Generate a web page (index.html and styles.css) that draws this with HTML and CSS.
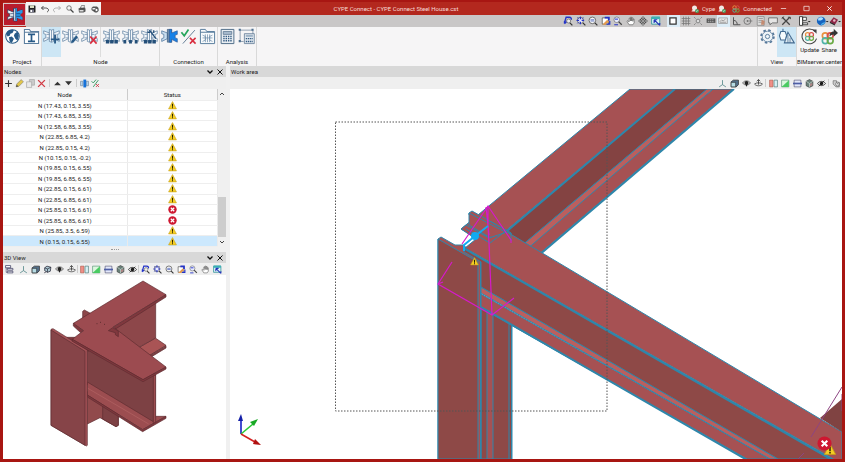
FILE: index.html
```html
<!DOCTYPE html>
<html lang="en">
<head>
<meta charset="utf-8">
<title>CYPE Connect - CYPE Connect Steel House.cst</title>
<link rel="stylesheet" href="styles.css">
</head>
<body>
<svg class="sprite" aria-hidden="true">
  <symbol id="save" viewBox="0 0 16 16"><path d="M1 1h13l1 1v13H1z" fill="#222"/><path d="M4 1h8v5H4z" fill="#d9dfc2"/><path d="M4 9h8v6H4z" fill="#778"/><path d="M5 10h3v4H5z" fill="#fff"/></symbol>
  <symbol id="undo" viewBox="0 0 16 16"><path d="M5 2L1 6l4 4M1 6h8c4 0 6 2 6 4s-1 3-3 4" fill="none" stroke="#333" stroke-width="1.7"/></symbol>
  <symbol id="redo" viewBox="0 0 16 16"><path d="M11 2l4 4-4 4M15 6H7c-4 0-6 2-6 4s1 3 3 4" fill="none" stroke="#999" stroke-width="1.5"/></symbol>
  <symbol id="search" viewBox="0 0 16 16"><circle cx="6" cy="6" r="4.5" fill="#f4f4f4" stroke="#555" stroke-width="1.5"/><path d="M9 9l6 6" stroke="#444" stroke-width="2.4"/></symbol>
  <symbol id="print" viewBox="0 0 16 16"><path d="M1 7l4-2h9l1 3v5l-4 2H2z" fill="#555"/><path d="M5 6l2-5h6l-1 5z" fill="#eee" stroke="#333"/><path d="M3 10h8v3H3z" fill="#ddd"/></symbol>
  <symbol id="print2" viewBox="0 0 16 16"><path d="M1 6l3-3h8l3 3v6l-3 3H8L1 10z" fill="#555"/><path d="M3 6h6v3H3z" fill="#eee"/><circle cx="11" cy="10" r="3" fill="#fff" stroke="#222"/></symbol>

  <symbol id="zprev" viewBox="0 0 16 16"><path d="M2 12L5 2h5c3 0 4 2 3 4" fill="none" stroke="#2433c8" stroke-width="2.2"/><path d="M1 8l2 5 4-4z" fill="#2433c8"/><circle cx="9" cy="8" r="3.2" fill="#eee" stroke="#555"/><path d="M11 11l4 4" stroke="#333" stroke-width="2"/></symbol>
  <symbol id="zall" viewBox="0 0 16 16"><circle cx="7" cy="7" r="5" fill="#eef" stroke="#555" stroke-width="1.2"/><path d="M11 11l4 4" stroke="#333" stroke-width="2"/><path d="M7 1v4M7 9v4M1 7h4M9 7h4" stroke="#2433c8" stroke-width="2"/><path d="M2 2l3 3M12 2L9 5M2 12l3-3" stroke="#2433c8"/></symbol>
  <symbol id="zout" viewBox="0 0 16 16"><circle cx="7" cy="7" r="5.3" fill="#f5f5f5" stroke="#555" stroke-width="1.3"/><path d="M11 11l4 4" stroke="#333" stroke-width="2"/><path d="M4 6h6M4 8h6" stroke="#556bc0" stroke-width="1.3"/></symbol>
  <symbol id="zwin" viewBox="0 0 16 16"><path d="M2 3h10v10H2z" fill="#fff" stroke="#333"/><path d="M6 1h8v6h-3V4H6z" fill="#2433c8"/><path d="M2 14l8-8 3 3-6 5z" fill="#e59b4d"/><path d="M9 13h5V8" fill="none" stroke="#2433c8" stroke-width="2"/></symbol>
  <symbol id="zfind" viewBox="0 0 16 16"><circle cx="6" cy="6" r="4.5" fill="#e7ebff" stroke="#666"/><path d="M9 9l5 5" stroke="#444" stroke-width="2"/><path d="M3 5h5M2 14h6" stroke="#2433c8" stroke-width="1.6"/></symbol>
  <symbol id="hand" viewBox="0 0 16 16"><path d="M5 14L1.500 8.500 3 7.500l2 2V3.500h2V8 2h2v6-5h2v5.500V5h2v6l-2 3z" fill="#fff" stroke="#555"/></symbol>
  <symbol id="move" viewBox="0 0 16 16"><path d="M8 1l3 3H9v3h3V5l3 3-3 3V9H9v3h2l-3 3-3-3h2V9H4v2L1 8l3-3v2h3V4H5z" fill="#eee" stroke="#333" stroke-width="1.200"/></symbol>
  <symbol id="screen" viewBox="0 0 16 16"><path d="M1 2h13v11H1z" fill="#dff5f6" stroke="#34949c" stroke-width="1.400"/><path d="M1 1h13v4H1z" fill="#3ab0b5"/><path d="M5 6l9 9M5 6v5M5 6h5M14 15v-4" stroke="#2433b8" stroke-width="1.800" fill="none"/></symbol>

  <symbol id="square" viewBox="0 0 16 16"><path d="M3 3h10v10H3z" fill="#fff" stroke="#333" stroke-width="2"/></symbol>
  <symbol id="grid" viewBox="0 0 16 16"><path d="M4 1v14M8 1v14M12 1v14M1 4h14M1 8h14M1 12h14" stroke="#777" stroke-width="1.200"/></symbol>
  <symbol id="snap" viewBox="0 0 16 16"><circle cx="8" cy="8" r="3" fill="#ddd" stroke="#555"/><path d="M2 2l2 2M14 2l-2 2M2 14l2-2M14 14l-2-2" stroke="#666" stroke-width="1.300"/></symbol>
  <symbol id="keys" viewBox="0 0 16 16"><path d="M1 4h14v7H1z" fill="#555"/><path d="M3 6h10M3 9h10" stroke="#ddd" stroke-dasharray="2 1"/></symbol>
  <symbol id="ruler" viewBox="0 0 16 16"><path d="M1 3h14v9H1z" fill="#e6e6e6" stroke="#888"/><path d="M3 9l3-3 2 2 4-3M3 10h10" stroke="#777" fill="none"/></symbol>
  <symbol id="angle" viewBox="0 0 16 16"><path d="M4 2v12h11M4 7c4 0 6 3 6 7" fill="none" stroke="#555" stroke-width="1.600"/></symbol>
  <symbol id="orbit" viewBox="0 0 16 16"><circle cx="7" cy="8" r="5.500" fill="none" stroke="#666" stroke-width="1.200"/><path d="M7 8h8" stroke="#666"/><circle cx="7" cy="8" r="1.200" fill="#555"/></symbol>
  <symbol id="table" viewBox="0 0 16 16"><path d="M2 1h11v14H2z" fill="#ddd" stroke="#777"/><path d="M4 4h7M4 7h7M4 10h7" stroke="#777"/><path d="M9 6l5 2-1 6H8z" fill="#c48b72"/></symbol>
  <symbol id="note" viewBox="0 0 16 16"><path d="M1 3h14v8H7l-4 3v-3H1z" fill="#e5e5e5" stroke="#555" stroke-width="1.200"/></symbol>
  <symbol id="tools" viewBox="0 0 16 16"><path d="M2 2l12 12M14 2L2 14" stroke="#444" stroke-width="2"/><path d="M1 4l4-3M11 2h4v3" stroke="#444" stroke-width="1.500" fill="none"/></symbol>
  <symbol id="dock" viewBox="0 0 20 16"><path d="M2 1h5v14H2zM7 2h6v5H7zM7 11h8v3H7z" fill="#fff" stroke="#333" stroke-width="1.400"/><path d="M15 8h5l-2.500 2z" fill="#222"/></symbol>
  <symbol id="globe" viewBox="0 0 20 16"><circle cx="8" cy="8" r="7" fill="#1764c0"/><path d="M3 4c3-3 7-2 8 0-1 3-5 4-8 3z" fill="#a9ddff"/><path d="M8 14c2-2 4-3 6-3" stroke="#53b4ee" stroke-width="2"/><path d="M15 8h5l-2.500 2z" fill="#222"/></symbol>
  <symbol id="book" viewBox="0 0 20 16"><path d="M1 9l6-7 7 4-5 8z" fill="#8f2546"/><path d="M1 9l8 4v2l-8-4z" fill="#222"/><circle cx="8" cy="7" r="2" fill="#e7b8c5"/><path d="M14 8h5l-2.500 2z" fill="#222"/></symbol>

  <symbol id="plus" viewBox="0 0 16 16"><path d="M8 2v12M2 8h12" stroke="#333" stroke-width="2"/></symbol>
  <symbol id="pencil" viewBox="0 0 16 16"><path d="M2 14l1-5 8-8 4 4-8 8z" fill="#e1c64a" stroke="#777"/><path d="M2 14l1-4 3 3z" fill="#444"/></symbol>
  <symbol id="copy" viewBox="0 0 16 16"><path d="M6 1h9v10H6z" fill="#ccc" stroke="#999"/><path d="M1 5h9v10H1z" fill="#e9e9e9" stroke="#999"/></symbol>
  <symbol id="del" viewBox="0 0 16 16"><path d="M2 2l12 12M14 2L2 14" stroke="#d23c46" stroke-width="2.400"/></symbol>
  <symbol id="up" viewBox="0 0 16 16"><path d="M2 11l6-6 6 6z" fill="#333"/></symbol>
  <symbol id="down" viewBox="0 0 16 16"><path d="M2 4h12l-6 7z" fill="#333"/></symbol>
  <symbol id="jblue" viewBox="0 0 16 16"><path d="M1 4h4v8H1zM11 4h4v8h-4z" fill="#b7d5ef" stroke="#678"/><path d="M6 1h5v14H6z" fill="#1672d8"/></symbol>
  <symbol id="check" viewBox="0 0 16 16"><path d="M1 4l3 3 5-6M4 14L13 2" fill="none" stroke="#3a9c63" stroke-width="1.700"/><path d="M9 9l5 5M14 9l-5 5" stroke="#d23c46" stroke-width="1.700"/></symbol>

  <symbol id="layers" viewBox="0 0 16 16"><path d="M1 1h9v4H1zM4 6h10v3H4zM4 11h10v3H4z" fill="#fff" stroke="#446" stroke-width="1.400"/><path d="M2 5v8h2" fill="none" stroke="#446"/></symbol>
  <symbol id="axes" viewBox="0 0 16 16"><path d="M8 2v8L2 14M8 10l6 4" fill="none" stroke="#4c8384" stroke-width="1.400"/></symbol>
  <symbol id="cube" viewBox="0 0 16 16"><path d="M2 5l4-3h9v8l-4 4H2z" fill="#54708a" stroke="#222" stroke-width="1.200"/><path d="M2 6h8v8H2z" fill="#b7dce4" stroke="#222"/></symbol>
  <symbol id="cuber" viewBox="0 0 16 16"><path d="M3 5l4-3 7 2-1 7-5 2-5-3z" fill="#acc8d2" stroke="#223" stroke-width="1.300"/><path d="M3 5l5 2 6-3M8 7v6M2 14l4-2" stroke="#223" stroke-width="1.200" fill="none"/></symbol>
  <symbol id="orb" viewBox="0 0 16 16"><path d="M1 7c3-5 11-5 14 0-3 5-11 5-14 0z" fill="#ddd" stroke="#333"/><circle cx="8" cy="7" r="3.500" fill="#222"/><path d="M8 9v4" stroke="#222" stroke-width="2"/></symbol>
  <symbol id="plane" viewBox="0 0 16 16"><path d="M1 9c3-3 11-3 14 0-3 4-11 4-14 0z" fill="#eee" stroke="#333" stroke-width="1.300"/><path d="M8 1v9M5 4l3-3 3 3" fill="none" stroke="#333" stroke-width="1.400"/></symbol>
  <symbol id="secr" viewBox="0 0 16 16"><path d="M1 2h6v12H1z" fill="#f08f88" stroke="#a54"/><path d="M9 2h6v12H9z" fill="#d8f1f4" stroke="#366"/></symbol>
  <symbol id="secg" viewBox="0 0 16 16"><path d="M1 2h13v12H1z" fill="#dbf7de" stroke="#486"/><path d="M1 14L14 2v12z" fill="#4acb62"/></symbol>
  <symbol id="secb" viewBox="0 0 16 16"><path d="M2 2h12v12H2z" fill="#e3e7fa" stroke="#446"/><path d="M0 8h16" stroke="#4e5ea5" stroke-width="3"/></symbol>
  <symbol id="hex" viewBox="0 0 16 16"><path d="M8 1l6 3v8l-6 3-6-3V4z" fill="#698079" stroke="#333"/><path d="M2 4l6 4 6-4M8 8v7" stroke="#e2e9e5" fill="none"/><path d="M9 9l4-2v4l-4 2z" fill="#b58686"/></symbol>
  <symbol id="eye" viewBox="0 0 16 16"><path d="M1 8c3-5 11-5 14 0-3 5-11 5-14 0z" fill="#eee" stroke="#222" stroke-width="1.500"/><circle cx="8" cy="8" r="3" fill="#111"/><path d="M3 13L13 3" stroke="#222" stroke-width="1.500"/></symbol>
  <symbol id="cubes" viewBox="0 0 16 16"><path d="M2 3h6v3h5v8H7L2 9z" fill="#ccc" stroke="#555"/><circle cx="10" cy="9" r="3.500" fill="#eee" stroke="#444"/><path d="M10 7v2h2" stroke="#444" fill="none"/></symbol>

  <symbol id="warn" viewBox="0 0 16 16"><path d="M8 1l7 13H1z" fill="#f4ce24" stroke="#c69d18" stroke-linejoin="round"/><path d="M8 5v5M8 11v2" stroke="#272100" stroke-width="1.800"/></symbol>
  <symbol id="err" viewBox="0 0 16 16"><circle cx="8" cy="8" r="7.500" fill="#ce1730"/><path d="M5 5l6 6M11 5l-6 6" stroke="#fff" stroke-width="2.200"/></symbol>
  <symbol id="chev" viewBox="0 0 16 16"><path d="M3 5l5 5 5-5" fill="none" stroke="#111" stroke-width="2.600"/></symbol>
  <symbol id="chevup" viewBox="0 0 16 16"><path d="M4 10l4-4 4 4" fill="none" stroke="#444" stroke-width="2"/></symbol>
  <symbol id="close" viewBox="0 0 16 16"><path d="M3 3l10 10M13 3L3 13" stroke="currentColor" stroke-width="2"/></symbol>
  <symbol id="min" viewBox="0 0 16 16"><path d="M2 8h12" stroke="#fff" stroke-width="1.500"/></symbol>
  <symbol id="max" viewBox="0 0 16 16"><path d="M2 3h12v10H2z" fill="none" stroke="#fff" stroke-width="1.500"/></symbol>
  <symbol id="user" viewBox="0 0 16 16"><circle cx="7" cy="6" r="5" fill="#f2e9e5"/><path d="M1 13c0-5 12-5 12 0z" fill="#f2e9e5"/><circle cx="12" cy="12" r="4" fill="#4b9e61"/><path d="M10 12l2 1 2-3" stroke="#fff" fill="none"/></symbol>
  <symbol id="rings" viewBox="0 0 16 16"><g fill="none" stroke-width="2"><circle cx="5" cy="5" r="3.400" stroke="#e8903e"/><circle cx="11" cy="5" r="3.400" stroke="#d8504a"/><circle cx="5" cy="11" r="3.400" stroke="#50b3a7"/><circle cx="11" cy="11" r="3.400" stroke="#6aaa45"/></g></symbol>

  <symbol id="joint" viewBox="0 0 24 24"><g fill="#f5f8fb" stroke="#5c7e9f" stroke-width="1"><path d="M1 4l8 3v8l-8 4v-4l3-1V9L1 8zM23 4l-8 3v8l8 4v-4l-3-1V9l3-1z"/><path d="M9 2l3 1 3-1v17l-3 1-3-1zM12 3v17M5 9h4M5 14h4M15 9h4M15 14h4"/></g></symbol>
  <symbol id="world" viewBox="0 0 24 24"><circle cx="12" cy="12" r="9.500" fill="#fff" stroke="#285a87" stroke-width="1.500"/><path d="M3 8c3-6 7-6 11-5l-2 4-3 1-1 3-3 1zM7 13l4-1 3 3-3 6-3-2zM15 8l4-3 2 6-2 7-3-3-2-4z" fill="#285a87"/></symbol>
  <symbol id="profile" viewBox="0 0 24 24"><path d="M2 2h7l2 3h11v17H2zM2 6h20" fill="#fff" stroke="#5b7e9f" stroke-width="1.500"/><path d="M7 9h10M7 19h10M12 9v10" stroke="#285a87" stroke-width="2.400"/></symbol>
  <symbol id="jadd" viewBox="0 0 24 24"><use href="#joint"/><path d="M17 10v12M11 16h12" stroke="#285a87" stroke-width="2.600"/></symbol>
  <symbol id="jedit" viewBox="0 0 24 24"><use href="#joint"/><path d="M12 22l1-4 7-8 3 3-7 8z" fill="#285a87" stroke="#fff" stroke-width=".6"/></symbol>
  <symbol id="jdel" viewBox="0 0 24 24"><use href="#joint"/><path d="M13 12l9 10M22 12l-9 10" stroke="#d92c3e" stroke-width="2.300"/></symbol>
  <symbol id="jrow" viewBox="0 0 24 24"><use href="#joint"/><path d="M4 17h5v5H4zM10 17h5v5h-5zM16 17h5v5h-5z" fill="#244f79"/></symbol>
  <symbol id="jspl" viewBox="0 0 24 24"><use href="#joint"/><path d="M2 17h4v5H2zM10 17h4v5h-4zM18 17h4v5h-4z" fill="#244f79"/></symbol>
  <symbol id="jwand" viewBox="0 0 24 24"><use href="#joint"/><path d="M4 17h5v5H4zM10 17h5v5h-5zM16 17h5v5h-5z" fill="#244f79"/><path d="M12 3l9 12M18 3v4M9 6h4" stroke="#244f79" stroke-width="1.800"/></symbol>
  <symbol id="jfull" viewBox="0 0 24 24"><path d="M1 4l8 3v8l-8 4v-4l3-1V9L1 8z" fill="#c9deef" stroke="#456f98"/><path d="M9 2h6v18H9z" fill="#6d8cab" stroke="#3b5b7e"/><path d="M12 2h3v5l8-3v5l-3 1v4l3 1v5l-8-4v4h-3z" fill="#1681e8" stroke="#345f9a"/></symbol>
  <symbol id="okno" viewBox="0 0 24 24"><path d="M2 6l4 5 6-9" fill="none" stroke="#27a55d" stroke-width="2.400"/><path d="M4 22L21 3" stroke="#667f98" stroke-width="1.400"/><path d="M14 14l8 8M22 14l-8 8" stroke="#d92c3e" stroke-width="2.200"/></symbol>
  <symbol id="jlib" viewBox="0 0 24 24"><path d="M2 2h7l2 3h11v17H2zM2 6h20" fill="#f7fafc" stroke="#5b7e9f" stroke-width="1.400"/><path d="M5 10l4 2v5l-4 2M19 10l-4 2v5l4 2M9 9v11M12 9v11M15 9v11M5 14h14" fill="none" stroke="#6c8ba9"/></symbol>
  <symbol id="calc" viewBox="0 0 24 24"><path d="M3 2h18v20H3z" fill="#e9eef3" stroke="#536f8b" stroke-width="1.400"/><path d="M6 5h12v4H6z" fill="#a9bdcf" stroke="#536f8b"/><path d="M6 12h12M6 15h12M6 18h12" stroke="#365d84" stroke-width="2" stroke-dasharray="2 1.300"/></symbol>
  <symbol id="calcsel" viewBox="0 0 24 24"><path d="M3 3h18M3 3v16h5M21 3v6" fill="none" stroke="#6b8299"/><path d="M1 1h3v3H1zM19 1h3v3h-3zM1 17h3v3H1z" fill="#4e6f90"/><path d="M9 8h14v14H9z" fill="#e1e8ef" stroke="#536f8b"/><path d="M11 11h10" stroke="#9eb3c7" stroke-width="3"/><path d="M11 15h10M11 19h10" stroke="#365d84" stroke-width="2" stroke-dasharray="2 1"/></symbol>
  <symbol id="gear" viewBox="0 0 24 24"><circle cx="12" cy="12" r="9" fill="none" stroke="#56799b" stroke-width="2.500" stroke-dasharray="3.600 3.460"/><circle cx="12" cy="12" r="7.500" fill="#eef4f8" stroke="#56799b" stroke-width="1.200"/><circle cx="12" cy="12" r="3" fill="none" stroke="#56799b" stroke-width="1.300"/></symbol>
  <symbol id="view" viewBox="0 0 24 24"><path d="M7 1v4M4 5h6l2 5-1 7H4L2 11z" fill="#f7fbfd" stroke="#446b91" stroke-width="1.500"/><path d="M14 6l9 15H9z" fill="#dfebf3" stroke="#446b91" stroke-width="1.500"/><path d="M14 10v11M17 14v7" stroke="#446b91"/></symbol>
  <symbol id="update" viewBox="0 0 24 24"><path d="M20 5A10.500 10.500 0 1 0 22 15" fill="none" stroke="#444" stroke-width="1.500"/><path d="M16 2h6v6z" fill="#444"/><use href="#rings" x="5" y="5" width="14" height="14"/></symbol>
  <symbol id="share" viewBox="0 0 24 24"><use href="#rings" x="0" y="5" width="19" height="19"/><path d="M12 12c0-5 3-7 6-7V1l6 6-6 5V9c-3 0-4 1-6 3z" fill="#333"/></symbol>
</svg>

<div class="window">
  <header class="top">
    <button class="logo" aria-label="Application menu"><svg viewBox="0 0 24 24"><path d="M1 4l7 3h2V2h5v5l8-3v5l-3 1v4l3 1v4l-8-3v5h-5v-5H8l-7 3v-4l3-1v-4L1 9z" fill="#eef1f4" stroke="#20385c"/><path d="M13 2h2v5l8-3v5l-3 1v4l3 1v4l-8-3v5h-2z" fill="#2698ea"/><path d="M10 2v18M13 2v18M5 10h5M5 14h5M14 10h6M14 14h6" stroke="#173765"/></svg></button>
    <div class="bars">
      <div class="titlebar">
        <nav class="quick">
          <button aria-label="Save"><svg><use href="#save"/></svg></button><button aria-label="Undo"><svg><use href="#undo"/></svg></button><button aria-label="Redo"><svg><use href="#redo"/></svg></button><button aria-label="Search"><svg><use href="#search"/></svg></button><button aria-label="Print"><svg><use href="#print"/></svg></button><button aria-label="Print preview"><svg><use href="#print2"/></svg></button>
        </nav>
        <h1>CYPE Connect - CYPE Connect Steel House.cst</h1>
        <div class="account">
          <svg><use href="#user"/></svg><span>Cype</span><svg><use href="#user"/></svg><svg class="ring"><use href="#rings"/></svg><span>Connected</span>
        </div>
        <div class="winbtns"><button aria-label="Minimize"><svg><use href="#min"/></svg></button><button aria-label="Maximize"><svg><use href="#max"/></svg></button><button aria-label="Close"><svg><use href="#close"/></svg></button></div>
      </div>
      <div class="strip">
        <div class="set set8"><button aria-label="Previous zoom"><svg><use href="#zprev"/></svg></button><button aria-label="Zoom all"><svg><use href="#zall"/></svg></button><button aria-label="Zoom out"><svg><use href="#zout"/></svg></button><button aria-label="Zoom window"><svg><use href="#zwin"/></svg></button><button aria-label="Find"><svg><use href="#zfind"/></svg></button><button aria-label="Pan"><svg><use href="#hand"/></svg></button><button aria-label="Move"><svg><use href="#move"/></svg></button><button aria-label="Full screen"><svg><use href="#screen"/></svg></button></div>
        <div class="set set10"><button class="on" aria-label="Frame"><svg><use href="#square"/></svg></button><button aria-label="Grid"><svg><use href="#grid"/></svg></button><button aria-label="Snap"><svg><use href="#snap"/></svg></button><button aria-label="Keyboard"><svg><use href="#keys"/></svg></button><button class="on" aria-label="Dimensions"><svg><use href="#ruler"/></svg></button><button aria-label="Angle"><svg><use href="#angle"/></svg></button><button aria-label="Radius"><svg><use href="#orbit"/></svg></button><button aria-label="Template"><svg><use href="#table"/></svg></button><button aria-label="Comment"><svg><use href="#note"/></svg></button><button aria-label="Tools"><svg><use href="#tools"/></svg></button></div>
        <div class="set menus"><button aria-label="Layout"><svg><use href="#dock"/></svg></button><button aria-label="Language"><svg><use href="#globe"/></svg></button><button aria-label="Help"><svg><use href="#book"/></svg></button></div>
      </div>
    </div>
  </header>

  <div class="ribbon">
    <section class="group"><div class="tools"><button aria-label="Job data"><svg><use href="#world"/></svg></button><button aria-label="Sections"><svg><use href="#profile"/></svg></button></div><h2>Project</h2></section>
    <section class="group"><div class="tools"><button class="on" aria-label="Add node"><svg><use href="#jadd"/></svg></button><button aria-label="Edit node"><svg><use href="#jedit"/></svg></button><button aria-label="Delete node"><svg><use href="#jdel"/></svg></button><i></i><button aria-label="Group nodes"><svg><use href="#jrow"/></svg></button><button aria-label="Ungroup nodes"><svg><use href="#jspl"/></svg></button><button aria-label="Auto group"><svg><use href="#jwand"/></svg></button></div><h2>Node</h2></section>
    <section class="group"><div class="tools"><button aria-label="Edit connection"><svg><use href="#jfull"/></svg></button><button aria-label="Check"><svg><use href="#okno"/></svg></button><button aria-label="Library"><svg><use href="#jlib"/></svg></button></div><h2>Connection</h2></section>
    <section class="group"><div class="tools"><button aria-label="Analyse"><svg><use href="#calc"/></svg></button><button aria-label="Analyse selection"><svg><use href="#calcsel"/></svg></button></div><h2>Analysis</h2></section>
    <section class="group far"><div class="tools"><button aria-label="Settings"><svg><use href="#gear"/></svg></button><button class="on" aria-label="Display"><svg><use href="#view"/></svg></button></div><h2>View</h2></section>
    <section class="group bim"><div class="tools"><button><svg><use href="#update"/></svg>Update</button><button><svg><use href="#share"/></svg>Share</button></div><h2>BIMserver.center</h2></section>
  </div>

  <main>
    <aside>
      <section class="nodes">
        <div class="head"><h2>Nodes</h2><button aria-label="Collapse nodes"><svg><use href="#chev"/></svg></button><button aria-label="Close nodes"><svg><use href="#close"/></svg></button></div>
        <div class="bar edit"><button aria-label="Add"><svg><use href="#plus"/></svg></button><button aria-label="Edit"><svg><use href="#pencil"/></svg></button><button aria-label="Copy"><svg><use href="#copy"/></svg></button><button aria-label="Delete"><svg><use href="#del"/></svg></button><i></i><button aria-label="Move up"><svg><use href="#up"/></svg></button><button aria-label="Move down"><svg><use href="#down"/></svg></button><i></i><button aria-label="Connection"><svg><use href="#jblue"/></svg></button><button aria-label="Check all"><svg><use href="#check"/></svg></button></div>
        <div class="list">
          <table>
            <thead><tr><th>Node</th><th>Status</th></tr></thead>
            <tbody>
              <tr><td>N (17.43, 0.15, 3.55)</td><td><svg><use href="#warn"/></svg></td></tr>
              <tr><td>N (17.43, 6.85, 3.55)</td><td><svg><use href="#warn"/></svg></td></tr>
              <tr><td>N (12.58, 6.85, 3.55)</td><td><svg><use href="#warn"/></svg></td></tr>
              <tr><td>N (22.85, 6.85, 4.2)</td><td><svg><use href="#warn"/></svg></td></tr>
              <tr><td>N (22.85, 0.15, 4.2)</td><td><svg><use href="#warn"/></svg></td></tr>
              <tr><td>N (10.15, 0.15, -0.2)</td><td><svg><use href="#warn"/></svg></td></tr>
              <tr><td>N (19.85, 0.15, 6.55)</td><td><svg><use href="#warn"/></svg></td></tr>
              <tr><td>N (19.85, 6.85, 6.55)</td><td><svg><use href="#warn"/></svg></td></tr>
              <tr><td>N (22.85, 0.15, 6.61)</td><td><svg><use href="#warn"/></svg></td></tr>
              <tr><td>N (22.85, 6.85, 6.61)</td><td><svg><use href="#warn"/></svg></td></tr>
              <tr><td>N (25.85, 0.15, 6.61)</td><td><svg><use href="#err"/></svg></td></tr>
              <tr><td>N (25.85, 6.85, 6.61)</td><td><svg><use href="#err"/></svg></td></tr>
              <tr><td>N (25.85, 3.5, 6.59)</td><td><svg><use href="#warn"/></svg></td></tr>
              <tr class="sel"><td>N (0.15, 0.15, 6.55)</td><td><svg><use href="#warn"/></svg></td></tr>
            </tbody>
          </table>
          <div class="scroll"><button aria-label="Scroll up"><svg><use href="#chevup"/></svg></button><div class="thumb"></div><button aria-label="Scroll down"><svg class="flip"><use href="#chevup"/></svg></button></div>
        </div>
      </section>
      <div class="split"></div>
      <section class="preview">
        <div class="head"><h2>3D View</h2><button aria-label="Collapse 3D view"><svg><use href="#chev"/></svg></button><button aria-label="Close 3D view"><svg><use href="#close"/></svg></button></div>
        <div class="bar view3d"><button aria-label="Layers"><svg><use href="#layers"/></svg></button><i class="gap"></i><button aria-label="Axes"><svg><use href="#axes"/></svg></button><button aria-label="Box"><svg><use href="#cube"/></svg></button><button aria-label="Rotate"><svg><use href="#cuber"/></svg></button><button aria-label="Orbit"><svg><use href="#orb"/></svg></button><button aria-label="Plane"><svg><use href="#plane"/></svg></button><i></i><button aria-label="Section X"><svg><use href="#secr"/></svg></button><button aria-label="Section Y"><svg><use href="#secg"/></svg></button><button aria-label="Section Z"><svg><use href="#secb"/></svg></button><button aria-label="Render"><svg><use href="#hex"/></svg></button><button aria-label="Hide"><svg><use href="#eye"/></svg></button><i></i><button aria-label="Previous zoom"><svg><use href="#zprev"/></svg></button><button aria-label="Zoom all"><svg><use href="#zall"/></svg></button><button aria-label="Zoom out"><svg><use href="#zout"/></svg></button><button aria-label="Zoom window"><svg><use href="#zwin"/></svg></button><button aria-label="Find"><svg><use href="#zfind"/></svg></button><button aria-label="Pan"><svg><use href="#hand"/></svg></button><button aria-label="Full screen"><svg><use href="#screen"/></svg></button></div>
        <svg class="model" viewBox="9 45 669 552" preserveAspectRatio="xMidYMid slice" role="img" aria-label="Steel joint model">
          <g stroke="#5d2c31" stroke-width="2" stroke-linejoin="round">
            <path d="M262 395v97l38-19 48 27 7-4v-50l-60-40z" fill="#914a4c"/>
            <path d="M308 430v47l40 23 7-4v-56z" fill="#7d4144"/>
            <path d="M248 154l5-4 22 12v22l-27 10z" fill="#8d474a"/>
            <path d="M413 265l53-31 32 22-50 31z" fill="#a95455"/>
            <path d="M498 257v7l-43 26-7-3z" fill="#7d4144"/>
            <path d="M345 204l122-80v110l-54 30-60-34z" fill="#8d474a"/>
            <path d="M262 260l204 80v146l-32 8-172-120z" fill="#7d4144"/>
            <path d="M262 366l198 119 6-16 32 0-70 40-166-104z" fill="#9c4d50"/>
            <path d="M262 384l184 108" fill="none" stroke="#b36464"/>
            <path d="M460 345h7v142l-7 4z" fill="#9c4d50"/>
            <path d="M262 405l166 104 70-40v6l-70 40-166-104z" fill="#80383e"/>
            <path d="M200 232h25l40 32v10z" fill="#80383e"/>
            <path d="M153 208l6-2 103 64v286l-3 2-106-62z" fill="#a35256"/>
            <path d="M153 210l102 64v282l-102-60z" fill="#864448"/>
            <path d="M220 190L429 63l69 41-158 97 158 120-69 38-212-121 33-26z" fill="#9c4b50"/>
            <path d="M220 190l30 22-8 6-22-20zM498 104v7L348 206l-8-5z" fill="#80383e"/>
            <path d="M325 212l13-9 17 10v17l-9-6v-6z" fill="#80383e"/>
            <path d="M217 238l212 121 69-38v6l-69 38-212-121z" fill="#80383e"/>
          </g>
          <path d="M290 191h2M301 187h2M313 193h2" stroke="#422" stroke-width="3"/>
        </svg>
      </section>
    </aside>

    <section class="work">
      <div class="head"><h2>Work area</h2></div>
      <div class="bar right"><button aria-label="Axes"><svg><use href="#axes"/></svg></button><button aria-label="Box"><svg><use href="#cube"/></svg></button><button aria-label="Orbit"><svg><use href="#orb"/></svg></button><button aria-label="Plane"><svg><use href="#plane"/></svg></button><i></i><button aria-label="Section X"><svg><use href="#secr"/></svg></button><button aria-label="Section Y"><svg><use href="#secg"/></svg></button><button aria-label="Section Z"><svg><use href="#secb"/></svg></button><button aria-label="Render"><svg><use href="#hex"/></svg></button><button aria-label="Hide"><svg><use href="#eye"/></svg></button><i></i><button aria-label="History"><svg><use href="#cubes"/></svg></button></div>
      <svg class="scene" viewBox="230 89 612 370" preserveAspectRatio="xMidYMid slice" role="img" aria-label="Steel structure">
        <g stroke="#2f86aa" stroke-width="1" stroke-linejoin="round">
          <path d="M524 248L713 89h20L537 256z" fill="#a65153"/>
          <path d="M520 247L707 89h6L526 250z" fill="#bb5f5e"/>
          <path d="M506 232L675 89h32L520 247z" fill="#844342"/>
          <path d="M461 229L630 89h45L489 245z" fill="#a65153"/>
          <path d="M507 231L675 89M734 89L538 256" fill="none" stroke-width="2"/>
          <path d="M481 296l31 20v143h-31z" fill="#8e4947"/>
          <path d="M487 300h6v159h-6z" fill="#a65153"/>
          <path d="M509 316v143M511.500 316v143" fill="none"/>
          <path d="M469 213l3-2 39 22v7l-42-25z" fill="#a65153"/>
          <path d="M469 213v12l20 12 22 3v-5z" fill="#a65153"/>
          <path d="M438 239l3-2 14 8h8l18 14v200h-43z" fill="#a65153"/>
          <path d="M438 239l40 23v197h-40z" fill="#8e4947"/>
          <path d="M480.500 260v199" fill="none"/>
          <path d="M481 294l289 165h-23L481 308z" fill="#a65153"/>
          <path d="M481 287l297 172h-8L481 293z" fill="#bb5f5e"/>
          <path d="M464 248l368 211h-54L481 287v-25l-17-10z" fill="#8e4947"/>
          <path d="M461 229l5-4 23 13 18-6 335 200v32L465 248l11-9z" fill="#a65153"/>
          <path d="M465 249l369 212M481 307l266 153" fill="none" stroke-width="2"/>
          <path d="M820 418l22-19v33z" fill="#804342" stroke="none"/>
          <path d="M466 229l24 14 17-13M486 219l25 14v8" fill="none"/>
        </g>
        <path d="M842 387l-31 50M804 453l-6 6M842 394v17" stroke="#8d4582" fill="none"/>
        <path d="M462 244l26-38 23 34v3M488 206v20l1 17 3 72M486 207l3 28M452 262l-14 22 54 31 22-17M438 284l5-2" stroke="#d51acb" stroke-width="1.200" fill="none"/>
        <path d="M488 226l-13 10-11 9v6" stroke="#12aaf0" stroke-width="2" fill="none"/>
        <circle cx="475" cy="236" r="4" fill="#12aaf0"/>
        <use href="#warn" x="470" y="257" width="9" height="9"/>
        <path d="M335.500 122h271.500v289H335.500z" fill="none" stroke="#555" stroke-dasharray="1.500 1.500"/>
        <path d="M241 434v-13" stroke="#1520c5" stroke-width="1.600"/><path d="M238 421l3-7 2 7z" fill="#1520a8"/>
        <path d="M241 434l12-10" stroke="#28c933" stroke-width="1.600"/><path d="M250 422l8-3-4 7z" fill="#18a824"/>
        <path d="M241 434l14 8" stroke="#d42020" stroke-width="1.600"/><path d="M255 439l6 6-8-1z" fill="#b01010"/>
        <use href="#warn" x="823" y="443" width="14" height="13"/>
        <use href="#err" x="817" y="436" width="15" height="15"/>
      </svg>
    </section>
  </main>
</div>
</body>
</html>
```
FILE: styles.css
```css
* { box-sizing: border-box; }
body { margin: 0; font: 6px/10px Roboto, "Open Sans", sans-serif; color: #222; }
h1, h2 { margin: 0; font: inherit; }
button { border: 0; padding: 0; margin: 0; background: none; font: inherit; color: inherit; display: flex; align-items: center; justify-content: center; }
svg { display: block; width: 10px; height: 10px; flex: none; }
.sprite { position: absolute; width: 0; height: 0; }
.window { height: 100vh; display: flex; flex-direction: column; border: 3px solid #a81612; border-top-width: 2px; background: #f0f0f0; overflow: hidden; }

.top { display: flex; height: 25px; flex: none; background: #b3281e; }
.logo { width: 23px; height: 23px; margin-top: 1px; background: #b91c2c; border: 1px solid #d9c6c6; }
.logo svg { width: 16px; height: 16px; }
.bars { flex: 1; display: flex; flex-direction: column; }
.titlebar { height: 13px; display: flex; align-items: center; color: #f7dcd8; }
.quick { width: 75px; align-self: stretch; display: flex; background: #f5f4f4; }
.quick button { flex: 1; }
.quick svg { width: 8px; height: 8px; }
h1 { flex: 1; text-align: center; }
.account { display: flex; align-items: center; gap: 3px; }
.account svg { width: 8px; height: 8px; }
.account .ring { margin-left: 3px; }
.winbtns { display: flex; width: 69px; margin-right: 1px; color: #fff; }
.winbtns button { flex: 1; }
.winbtns svg { width: 7px; height: 7px; }
.strip { flex: 1; display: flex; justify-content: flex-end; background: #c9c7c7; }
.set { display: flex; align-items: stretch; }
.set button { flex: 1; }
.set .on { background: #dcecf6; }
.set8 { width: 100px; margin-right: 5px; }
.set10 { width: 125px; }
.menus { width: 50px; }
.menus button:first-child { flex: 2; }
.menus svg { width: 13px; height: 10px; }

.ribbon { display: flex; height: 39px; flex: none; background: #f6f5f6; }
.group { display: flex; flex-direction: column; justify-content: space-between; border-right: 1px solid #d9d9d9; }
.group h2 { text-align: center; line-height: 9px; }
.tools { display: flex; }
.tools button { width: 19px; height: 30px; padding-top: 1px; flex-direction: column; justify-content: flex-start; line-height: 8px; }
.tools svg { width: 17px; height: 17px; }
.tools .on { background: #cde6f5; }
.tools i { width: 1px; margin: 0 1px; background: #ddd; }
.far { margin-left: auto; border-left: 1px solid #d9d9d9; }
.bim { border: 0; }
.bim .tools { justify-content: space-around; padding: 0 3px; }
.bim .tools svg { margin-bottom: 1px; }

main { flex: 1; min-height: 0; display: flex; }
aside { width: 223px; flex: none; display: flex; flex-direction: column; margin-right: 4px; }
.head { display: flex; align-items: center; height: 11px; background: #d8d8d8; padding: 0 1px; }
.head h2 { flex: 1; }
.head button { width: 10px; color: #111; }
.head svg { width: 8px; height: 8px; }
.bar { display: flex; align-items: center; height: 12px; background: #efefef; }
.bar button { width: 12px; }
.bar svg { width: 9px; height: 9px; }
.bar i { width: 1px; height: 8px; background: #ccc; }
.bar .gap { width: 2px; background: none; }
.edit button { width: 11px; }
.edit i { margin: 0 2px; }
.view3d { padding-right: 3px; }
.view3d button { flex: 1; }
.right { justify-content: flex-end; }
.right i { margin: 0 1px; }

.list { display: flex; background: #fff; }
table { flex: 1; height: 158px; border-collapse: collapse; table-layout: fixed; line-height: 9px; }
th, td { padding: 0; text-align: center; font-weight: 400; border-bottom: 1px solid #eee; border-right: 1px solid #eaeaea; }
th { height: 11px; background: #f7f7f7; border-right-color: #ccc; }
th:first-child { width: 124px; }
td svg { width: 9px; height: 9px; margin: auto; }
.sel { background: #cce8fd; }
.scroll { width: 8px; display: flex; flex-direction: column; background: #f0f0f0; }
.scroll button { height: 10px; }
.scroll svg { width: 8px; height: 8px; }
.flip { rotate: 180deg; }
.thumb { height: 40px; margin-top: auto; background: #cdcdcd; }
.split { height: 5px; display: flex; align-items: center; justify-content: center; }
.split::before { content: ""; width: 8px; border-top: 1px dotted #999; }
.preview, .work { flex: 1; min-height: 0; display: flex; flex-direction: column; }
.work { min-width: 0; }
.model, .scene { flex: 1; min-height: 0; width: 100%; height: auto; background: #fff; }
```
